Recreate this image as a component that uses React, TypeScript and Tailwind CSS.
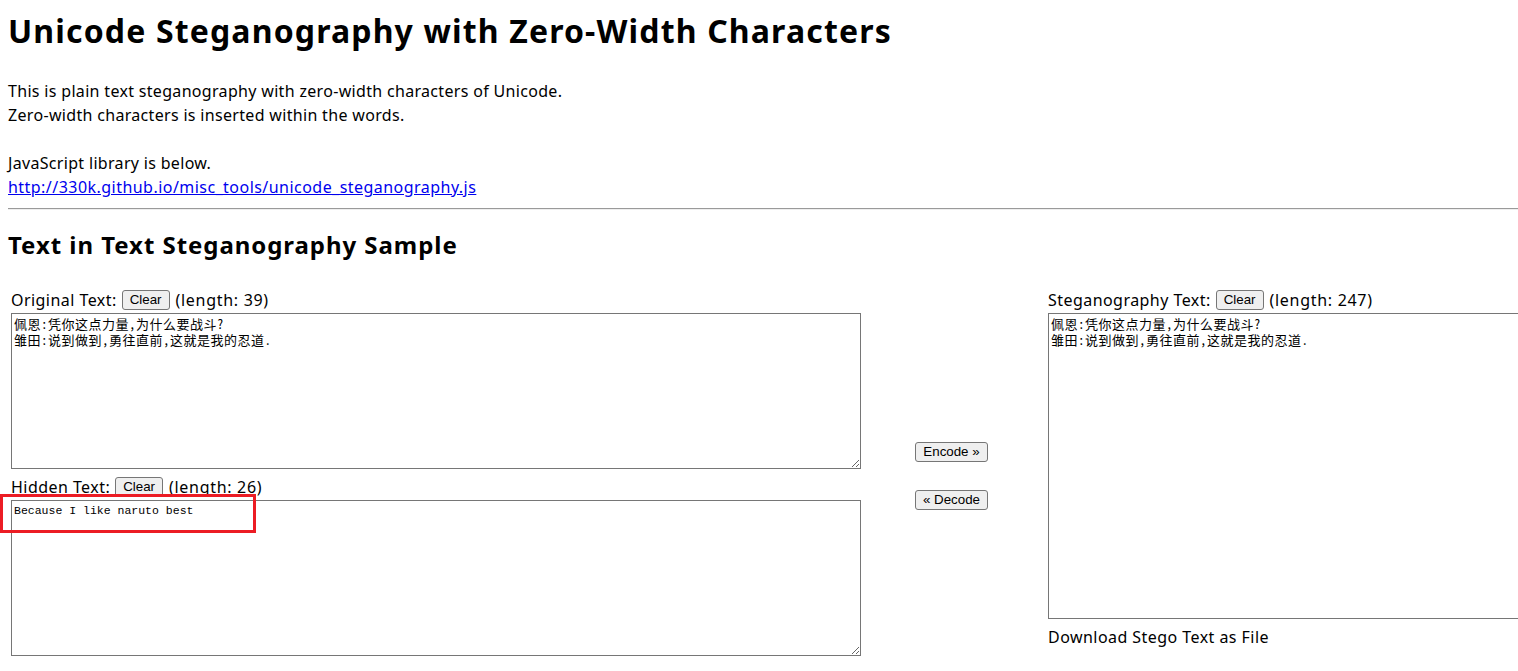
import React from "react";

const cjk =
  "佩恩:凭你这点力量,为什么要战斗?\n雏田:说到做到,勇往直前,这就是我的忍道.";

function Btn({ children }: { children: React.ReactNode }) {
  return (
    <button className="h-[20px] px-[7px] border border-[#767676] rounded-[3px] bg-[#efefef] text-[13.33px] leading-[18px] tracking-normal text-black font-['Liberation_Sans',sans-serif]">
      {children}
    </button>
  );
}

function LabelRow({ label, len }: { label: string; len: number }) {
  return (
    <div className="flex items-center h-[22px] text-[16px] leading-[24px] whitespace-nowrap">
      <span className="tracking-[0.45px]">{label}</span>
      <span className="ml-[5px] flex">
        <Btn>Clear</Btn>
      </span>
      <span className="ml-[6px] tracking-[0.7px]">(length: {len})</span>
    </div>
  );
}

export default function App() {
  return (
    <div className="relative w-[1518px] h-[671px] overflow-hidden bg-white text-black font-['Noto_Sans',sans-serif]">
      <div className="w-[1700px] px-[8px]">
        <h1 className="pt-[13px] text-[32px] leading-[36px] font-bold tracking-[1.15px]">
          Unicode Steganography with Zero-Width Characters
        </h1>
        <div className="mt-[30px] text-[16px] leading-[24px] tracking-[0.32px]">
          <div>This is plain text steganography with zero-width characters of Unicode.</div>
          <div>Zero-width characters is inserted within the words.</div>
          <div className="h-[24px]" />
          <div>JavaScript library is below.</div>
          <div>
            <a href="#" className="text-[#0000ee] underline tracking-[0.46px]">
              http://330k.github.io/misc_tools/unicode_steganography.js
            </a>
          </div>
        </div>
        <hr className="mt-[9px] border-t border-t-[#9a9a9a] border-b border-b-[#eeeeee]" />
        <h2 className="mt-[21px] text-[24px] leading-[28px] font-bold tracking-[0.95px]">
          Text in Text Steganography Sample
        </h2>
        <div className="mt-[30px] flex">
          <div className="ml-[3px] w-[850px] flex flex-col">
            <LabelRow label="Original Text:" len={39} />
            <textarea
              className="mt-[2px] w-[850px] h-[156px] border border-[#767676] p-[2px] text-[13px] leading-[16px] tracking-[0.5px] font-['Noto_Sans_Mono_CJK_JP','Noto_Sans_CJK_JP',monospace] resize"
              defaultValue={cjk}
            />
            <div className="mt-[7px]">
              <LabelRow label="Hidden Text:" len={26} />
            </div>
            <textarea
              className="mt-[2px] w-[850px] h-[156px] border border-[#767676] p-[2px] text-[11.5px] leading-[16px] font-['Liberation_Mono','Noto_Sans_CJK_JP',monospace] resize"
              defaultValue="Because I like naruto best"
            />
          </div>
          <div className="w-[181px] flex flex-col items-center pt-[153px] gap-[28px]">
            <Btn>Encode »</Btn>
            <Btn>« Decode</Btn>
          </div>
          <div className="ml-[6px] flex flex-col">
            <LabelRow label="Steganography Text:" len={247} />
            <textarea
              className="mt-[2px] w-[600px] h-[306px] border border-[#767676] p-[2px] text-[13px] leading-[16px] tracking-[0.5px] font-['Noto_Sans_Mono_CJK_JP','Noto_Sans_CJK_JP',monospace] resize"
              defaultValue={cjk}
            />
            <div className="mt-[6px] text-[16px] leading-[24px] tracking-[0.45px]">Download Stego Text as File</div>
          </div>
        </div>
      </div>
      <div className="absolute left-0 top-[494px] w-[256px] h-[39px] border-[3px] border-[#ec1c24] pointer-events-none" />
    </div>
  );
}
